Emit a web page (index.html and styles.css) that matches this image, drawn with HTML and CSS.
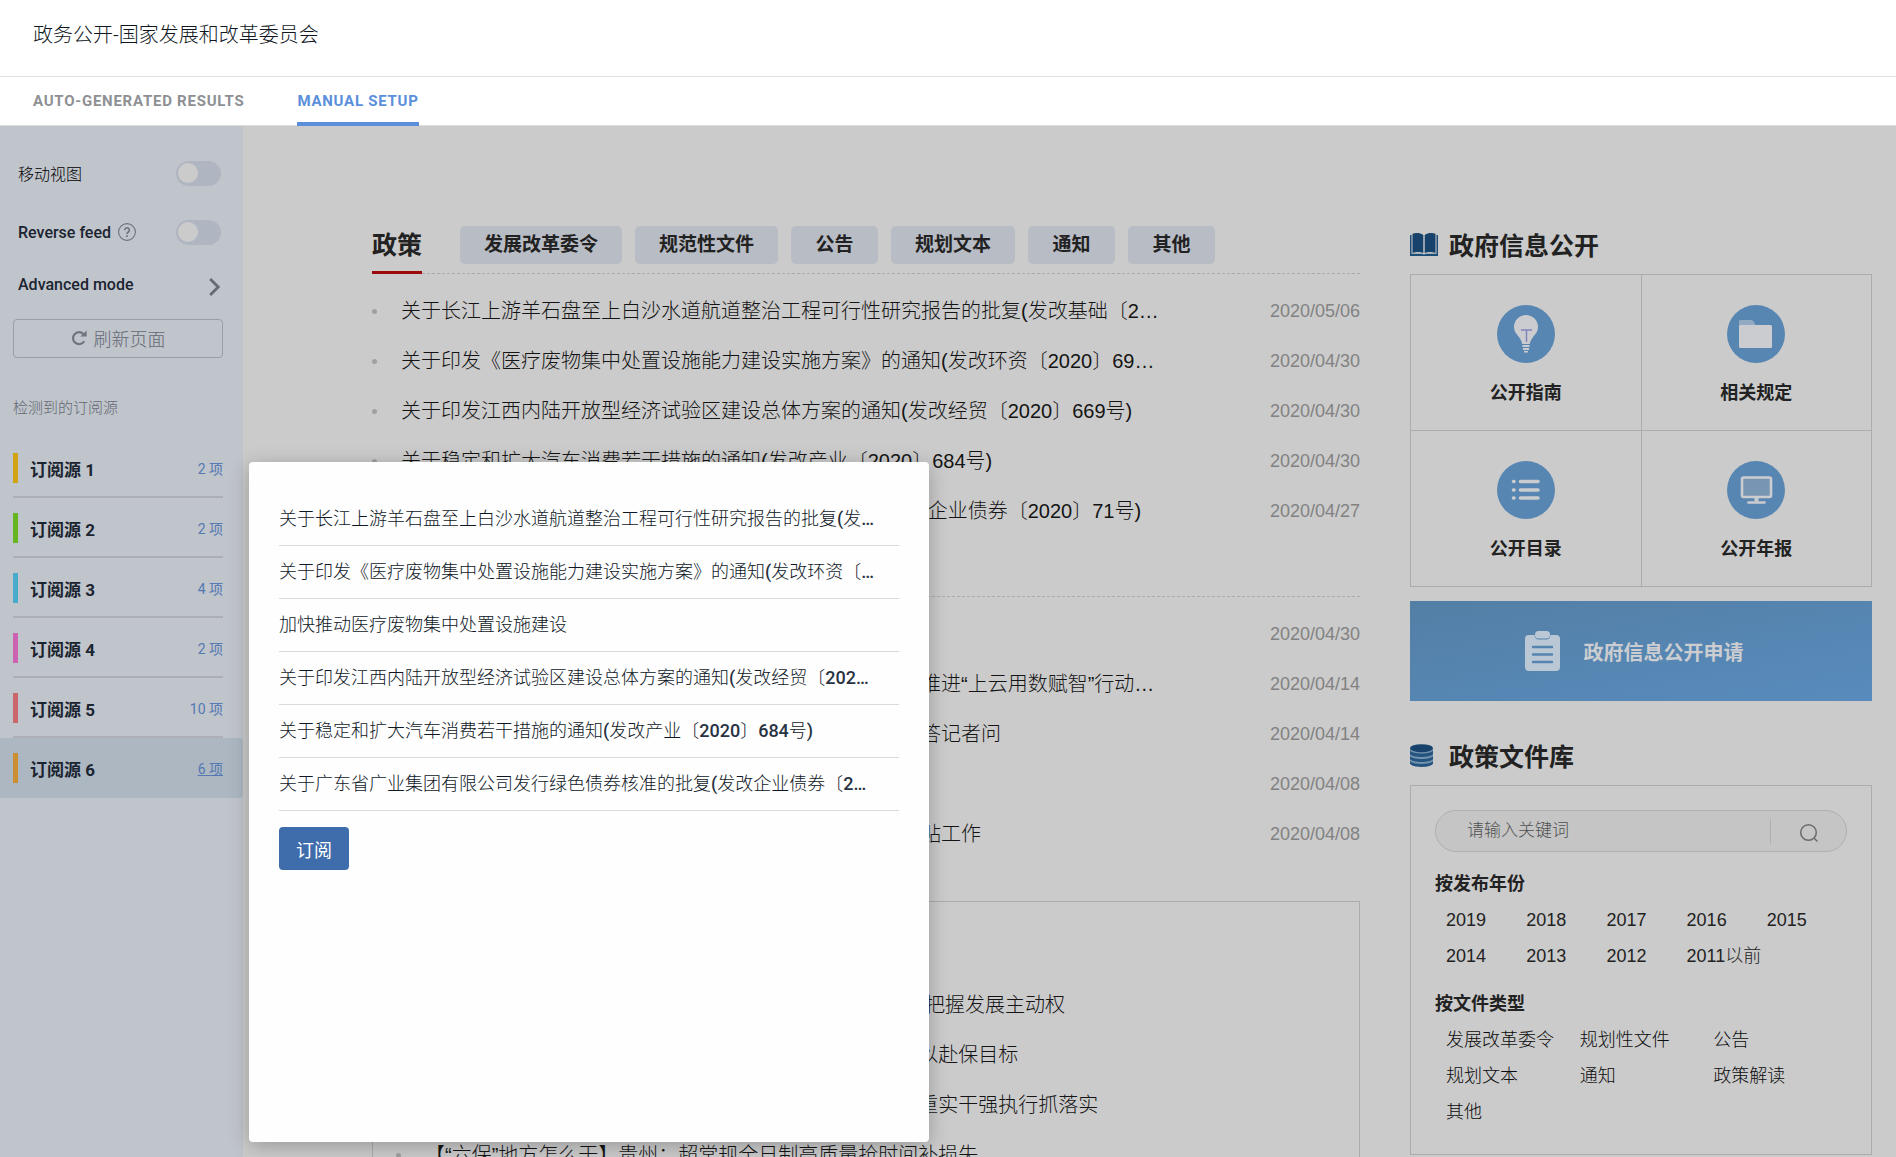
FILE: index.html
```html
<!DOCTYPE html>
<html lang="zh-CN">
<head>
<meta charset="utf-8">
<title>政务公开-国家发展和改革委员会</title>
<link rel="stylesheet" href="styles.css">
</head>
<body>
<header class="topbar">
  <h1 class="topbar-title">政务公开-国家发展和改革委员会</h1>
</header>
<nav class="modes">
  <a class="mode" href="#auto">AUTO-GENERATED RESULTS</a>
  <a class="mode mode-active" href="#manual">MANUAL SETUP</a>
</nav>
<div class="workspace">
  <aside class="sidebar">
    <div class="option">
      <label class="option-label" for="mobile-view">移动视图</label>
      <input class="toggle" type="checkbox" id="mobile-view">
    </div>
    <div class="option">
      <label class="option-label" for="reverse-feed">Reverse feed</label>
      <svg class="help" viewBox="0 0 18 18" width="18" height="18" fill="none" stroke="#6d737d"><circle cx="9" cy="9" r="8.4" stroke-width="1.1"/><path d="M6.7 7.2a2.3 2.3 0 1 1 3.6 1.8c-.9.6-1.3.9-1.3 1.9" stroke-width="1.6"/><path d="M9 12.2v1.7" stroke-width="1.7"/></svg>
      <input class="toggle" type="checkbox" id="reverse-feed">
    </div>
    <a class="option option-link" href="#advanced">
      <span class="option-label">Advanced mode</span>
      <svg class="chevron" viewBox="0 0 12 18" width="12" height="18" fill="none" stroke="#666b74" stroke-width="2.8"><path d="M1.2 1l8 8-8 8"/></svg>
    </a>
    <button class="refresh" type="button">
      <svg viewBox="0 0 16 16" width="16" height="16" fill="none" stroke="#6f757f" stroke-width="2.2"><path d="M13.2 11.2A6 6 0 1 1 12.4 4"/><path d="M15.6.6v6H9.4z" fill="#6f757f" stroke="none"/></svg>
      <span>刷新页面</span>
    </button>
    <h2 class="found">检测到的订阅源</h2>
    <ul class="feeds">
      <li class="feed feed-gold"><span class="feed-name">订阅源 1</span><a class="feed-count" href="#feed1">2 项</a></li>
      <li class="feed feed-green"><span class="feed-name">订阅源 2</span><a class="feed-count" href="#feed2">2 项</a></li>
      <li class="feed feed-blue"><span class="feed-name">订阅源 3</span><a class="feed-count" href="#feed3">4 项</a></li>
      <li class="feed feed-pink"><span class="feed-name">订阅源 4</span><a class="feed-count" href="#feed4">2 项</a></li>
      <li class="feed feed-red"><span class="feed-name">订阅源 5</span><a class="feed-count" href="#feed5">10 项</a></li>
      <li class="feed feed-orange feed-active"><span class="feed-name">订阅源 6</span><a class="feed-count" href="#feed6">6 项</a></li>
    </ul>
  </aside>

  <main class="preview">
    <div class="news">
      <div class="section-head">
        <h2 class="section-title">政策</h2>
        <div class="chips">
          <a class="chip" href="#p1">发展改革委令</a>
          <a class="chip" href="#p2">规范性文件</a>
          <a class="chip" href="#p3">公告</a>
          <a class="chip" href="#p4">规划文本</a>
          <a class="chip" href="#p5">通知</a>
          <a class="chip" href="#p6">其他</a>
        </div>
      </div>
      <ul class="articles">
        <li class="article"><a href="#a1">关于长江上游羊石盘至上白沙水道航道整治工程可行性研究报告的批复(发改基础〔2…</a><time>2020/05/06</time></li>
        <li class="article"><a href="#a2">关于印发《医疗废物集中处置设施能力建设实施方案》的通知(发改环资〔2020〕69…</a><time>2020/04/30</time></li>
        <li class="article"><a href="#a3">关于印发江西内陆开放型经济试验区建设总体方案的通知(发改经贸〔2020〕669号)</a><time>2020/04/30</time></li>
        <li class="article"><a href="#a4">关于稳定和扩大汽车消费若干措施的通知(发改产业〔2020〕684号)</a><time>2020/04/30</time></li>
        <li class="article"><a href="#a5">关于广东省广业集团有限公司发行绿色债券核准的批复(发改企业债券〔2020〕71号)</a><time>2020/04/27</time></li>
      </ul>
      <div class="section-head section-head-next">
        <h2 class="section-title">解读</h2>
      </div>
      <ul class="articles">
        <li class="article"><a href="#b1">加快推动医疗废物集中处置设施建设</a><time>2020/04/30</time></li>
        <li class="article"><a href="#b2">国家发展改革委高技术司有关负责同志就《实施方案》加快推进“上云用数赋智”行动…</a><time>2020/04/14</time></li>
        <li class="article"><a href="#b3">国家发展改革委有关负责同志就《营造更好发展环境方案》答记者问</a><time>2020/04/14</time></li>
        <li class="article"><a href="#b4">稳妥推进价格临时补贴</a><time>2020/04/08</time></li>
        <li class="article"><a href="#b5">国家发展改革委有关负责人就进一步做好阶段性价格临时补贴工作</a><time>2020/04/08</time></li>
      </ul>
      <section class="topic">
        <h2 class="topic-title">专题</h2>
        <ul class="articles">
          <li class="article"><a href="#c1">【“六保”地方怎么干】江西：以5G产业为引领升级提速，把握发展主动权</a></li>
          <li class="article"><a href="#c2">【“六保”地方怎么干】浙江：稳外贸稳外资稳投资，全力以赴保目标</a></li>
          <li class="article"><a href="#c3">【“六保”地方怎么干】山东：聚焦重点任务压实各责任，重实干强执行抓落实</a></li>
          <li class="article"><a href="#c4">【“六保”地方怎么干】贵州：超常规全日制高质量抢时间补损失</a></li>
        </ul>
      </section>
    </div>

    <div class="side">
      <h2 class="side-title">
        <svg viewBox="0 0 28 23" width="28" height="23"><path d="M0 2h1.500v18.800h10.500l2 .8 2-.8h10.500V2h1.500v21H0z" fill="#1d4e79"/><path d="M2.500 .8C6-.3 10-.2 13.300 2v18c-3.300-1.500-7.300-1.300-10.800 0zM14.700 2c3.300-2.200 7.300-2.300 10.800-1.200V20c-3.500-1.300-7.500-1.500-10.800 0z" fill="#16426b"/></svg>
        <span>政府信息公开</span>
      </h2>
      <div class="tiles">
        <a class="tile" href="#t1">
          <svg viewBox="0 0 58 58" width="58" height="58"><circle cx="29" cy="29" r="29" fill="#5786b2"/><path d="M29 10a12 12 0 0 0-12 12c0 4 2 6.500 4.500 9.500 2.200 2.700 3.200 4.500 3.700 7.500h7.600c.5-3 1.500-4.800 3.700-7.500C39 28.500 41 26 41 22a12 12 0 0 0-12-12zM25.500 40h7v2h-7zM26 43h6v2h-6zM27 46h4v1.500h-4z" fill="#cbcccf"/><path d="M24 25h11M29.500 25v12" stroke="#8583bd" stroke-width="1.500" fill="none"/></svg>
          <span>公开指南</span>
        </a>
        <a class="tile" href="#t2">
          <svg viewBox="0 0 58 58" width="58" height="58"><circle cx="29" cy="29" r="29" fill="#5786b2"/><path d="M12 24v-7.500q0-1.500 1.500-1.500H24q2 0 3 2l1.500 3H30v4z" fill="#93aac2"/><rect x="12" y="20" width="33" height="23" rx="1.500" fill="#cbcccf"/></svg>
          <span>相关规定</span>
        </a>
        <a class="tile" href="#t3">
          <svg viewBox="0 0 58 58" width="58" height="58"><circle cx="29" cy="29" r="29" fill="#5786b2"/><path d="M23.500 20.500h17.500M23.500 29h17.500M23.500 37h17.500M16.500 20.500h.5M16.500 29h.5M16.500 37h.5" stroke="#cbcccf" stroke-width="3.600" stroke-linecap="round"/></svg>
          <span>公开目录</span>
        </a>
        <a class="tile" href="#t4">
          <svg viewBox="0 0 58 58" width="58" height="58"><circle cx="29" cy="29" r="29" fill="#5786b2"/><rect x="15" y="16.500" width="29" height="19.500" rx="1.500" fill="#7895b3" stroke="#cbcccf" stroke-width="2.600"/><path d="M27.500 37h4v3.500h-4z" fill="#cbcccf"/><path d="M21.500 41.500h16" stroke="#cbcccf" stroke-width="2.600" stroke-linecap="round"/></svg>
          <span>公开年报</span>
        </a>
      </div>
      <a class="apply" href="#apply">
        <svg viewBox="0 0 35 40" width="35" height="40"><path d="M4 4h5.500c.5 3.500 2 4.500 4.500 4.500h7c2.500 0 4-1 4.500-4.500H31a4 4 0 0 1 4 4v28a4 4 0 0 1-4 4H4a4 4 0 0 1-4-4V8a4 4 0 0 1 4-4z" fill="#bac8d6"/><rect x="10" y="0" width="15" height="7.500" rx="3.500" fill="#bac8d6"/><path d="M8 16h19M8 23.500h19M8 31h19" stroke="#5684b0" stroke-width="2.400" stroke-linecap="round"/></svg>
        <span>政府信息公开申请</span>
      </a>
      <h2 class="side-title side-title-next">
        <svg viewBox="0 0 28 23" width="28" height="23"><path d="M0 4v15c0 5 23 5 23 0V4z" fill="#7393ae"/><ellipse cx="11.500" cy="4.200" rx="11.500" ry="4" fill="#16426b"/><path d="M0 6.500c2 4 21 4 23 0v3.500c-2 4-21 4-23 0zM0 12c2 4 21 4 23 0v3c-2 4-21 4-23 0zM0 17c2 4 21 4 23 0v2.500c-2 4.500-21 4.500-23 0z" fill="#24547f"/></svg>
        <span>政策文件库</span>
      </h2>
      <section class="library">
        <form class="search">
          <input class="search-input" type="text" placeholder="请输入关键词" aria-label="请输入关键词">
          <button class="search-button" type="submit" aria-label="搜索"><svg viewBox="0 0 20 20" width="20" height="20" fill="none" stroke="#6b6b6b" stroke-width="1.500"><circle cx="9.500" cy="9.500" r="7.800"/><path d="M15 15l3.500 3.500"/></svg></button>
        </form>
        <h3 class="filter-title">按发布年份</h3>
        <div class="filters filters-year">
          <a href="#y">2019</a><a href="#y">2018</a><a href="#y">2017</a><a href="#y">2016</a><a href="#y">2015</a>
          <a href="#y">2014</a><a href="#y">2013</a><a href="#y">2012</a><a href="#y">2011以前</a>
        </div>
        <h3 class="filter-title">按文件类型</h3>
        <div class="filters filters-type">
          <a href="#k">发展改革委令</a><a href="#k">规划性文件</a><a href="#k">公告</a>
          <a href="#k">规划文本</a><a href="#k">通知</a><a href="#k">政策解读</a>
          <a href="#k">其他</a>
        </div>
      </section>
    </div>
  </main>

  <section class="popup" role="dialog" aria-label="订阅源 6">
    <ul class="items">
      <li class="item">关于长江上游羊石盘至上白沙水道航道整治工程可行性研究报告的批复<b>(</b>发<b>…</b></li>
      <li class="item">关于印发《医疗废物集中处置设施能力建设实施方案》的通知<b>(</b>发改环资〔<b>…</b></li>
      <li class="item">加快推动医疗废物集中处置设施建设</li>
      <li class="item">关于印发江西内陆开放型经济试验区建设总体方案的通知<b>(</b>发改经贸〔<b>202…</b></li>
      <li class="item">关于稳定和扩大汽车消费若干措施的通知<b>(</b>发改产业〔<b>2020</b>〕<b>684</b>号<b>)</b></li>
      <li class="item">关于广东省广业集团有限公司发行绿色债券核准的批复<b>(</b>发改企业债券〔<b>2…</b></li>
    </ul>
    <button class="subscribe" type="button">订阅</button>
  </section>
</div>
</body>
</html>
```

FILE: styles.css
```css
*, *::before, *::after { box-sizing: border-box; }

body {
  margin: 0;
  height: 100vh;
  display: flex;
  flex-direction: column;
  overflow: hidden;
  font-family: Roboto, "Noto Sans CJK SC", sans-serif;
  font-weight: 300;
  color: #1f2937;
  background: #fff;
}

h1, h2, h3, ul { margin: 0; padding: 0; font-weight: inherit; }
ul { list-style: none; }
a { color: inherit; text-decoration: none; }
svg { display: block; flex: none; }
button, input { font-family: inherit; }

/* Top bar and mode tabs */
.topbar {
  flex: none;
  height: 77px;
  padding: 17px 33px;
  border-bottom: 1px solid #dfe1e3;
}
.topbar-title { font-size: 20px; line-height: 36px; color: #0e1622; }
.modes {
  flex: none;
  display: flex;
  gap: 53px;
  height: 49px;
  padding: 0 33px;
  border-bottom: 1px solid #dcdcdc;
}
.mode {
  height: 49px;
  font-size: 15px;
  font-weight: 700;
  line-height: 48px;
  letter-spacing: 0.05em;
  color: #8e9093;
}
.mode-active { color: #5b8fdc; border-bottom: 4px solid #5b8fdc; }

.workspace {
  position: relative;
  flex: 1;
  display: flex;
  min-height: 0;
}

/* Sidebar */
.sidebar { flex: none; width: 243px; padding-top: 26px; background: #c0c4cb; }
.option {
  display: flex;
  align-items: center;
  height: 42px;
  margin-bottom: 17px;
  padding: 0 22px 0 18px;
  font-size: 16px;
  color: #1b2431;
}
.option-label { font-weight: 500; }
.option:first-child .option-label { font-weight: 300; color: #000; }
.option-link { align-items: flex-start; height: 34px; margin-bottom: 15px; padding-top: 5px; }
.help { margin-left: 7px; }
.chevron { margin: 3px 0 0 auto; }
.toggle {
  appearance: none;
  display: flex;
  align-items: center;
  width: 45px;
  height: 25px;
  margin: 0 0 0 auto;
  padding: 2px;
  border-radius: 13px;
  background: #afb6c1;
}
.toggle::before {
  content: "";
  width: 20px;
  height: 20px;
  border-radius: 50%;
  background: #cbcbcb;
}
.refresh {
  display: flex;
  align-items: center;
  justify-content: center;
  gap: 7px;
  width: 210px;
  height: 39px;
  margin: 0 0 0 13px;
  padding: 0 0 2px;
  border: 1px solid #9a9ea6;
  border-radius: 4px;
  background: none;
  font-size: 18px;
  font-weight: 300;
  color: #636974;
}
.found {
  margin: 38px 13px 18px;
  font-size: 15px;
  line-height: 24px;
  color: #636974;
}
.feeds { padding-bottom: 20px; }
.feed {
  display: flex;
  align-items: center;
  height: 60px;
  padding: 0 20px 0 13px;
}
.feed:not(.feed-active) {
  background: linear-gradient(#acafb5, #acafb5) 13px 100% / 210px 2px no-repeat;
}
.feed::before { content: ""; width: 5px; height: 30px; margin-right: 12px; background: currentColor; }
.feed-active { border-radius: 0 3px 3px 0; background: #acb7c2; }
.feed-gold { color: #cfa312; }
.feed-green { color: #66b71f; }
.feed-blue { color: #48abcb; }
.feed-pink { color: #cb63b0; }
.feed-red { color: #cb676c; }
.feed-orange { color: #cb8f30; }
.feed-name { font-size: 17px; font-weight: 700; color: #1b2431; }
.feed-count { margin-left: auto; font-size: 14px; font-weight: 400; color: #5479b3; }
.feed-active .feed-count { text-decoration: underline; }

/* Previewed page */
.preview {
  flex: 1;
  min-width: 0;
  display: grid;
  grid-template-columns: minmax(0, 1fr) 462px;
  align-items: start;
  gap: 50px;
  padding: 100px 24px 0 129px;
  overflow: hidden;
  background: #cbcbcb;
  color: #222;
  font-family: "Liberation Sans", "Noto Sans CJK SC", sans-serif;
}
.section-head {
  display: flex;
  gap: 38px;
  height: 48px;
  margin-bottom: 12px;
  border-bottom: 1px dashed #acacac;
}
.section-head-next { margin-top: 13px; }
.section-title {
  height: 48px;
  border-bottom: 3px solid #9c0a0e;
  font-size: 25px;
  font-weight: 700;
  line-height: 38px;
}
.chips { display: flex; gap: 13px; }
.chip {
  min-width: 87px;
  height: 38px;
  padding: 0 24px;
  border-radius: 5px;
  background: #b8bcc4;
  font-size: 19px;
  font-weight: 700;
  line-height: 38px;
  text-align: center;
}
.article {
  display: flex;
  align-items: center;
  height: 50px;
  font-size: 20px;
  line-height: 28px;
  white-space: nowrap;
}
.article a { color: #141414; }
.article::before {
  content: "";
  width: 5px;
  height: 5px;
  margin-right: 24px;
  border-radius: 50%;
  background: #a0a0a0;
}
.article time { margin-left: auto; font-size: 18px; color: #828282; }
.topic { margin-top: 42px; padding: 20px 23px; border: 1px solid #acacac; }
.topic-title { margin-bottom: 22px; font-size: 25px; font-weight: 700; line-height: 36px; }

.side-title {
  display: flex;
  align-items: center;
  gap: 11px;
  height: 36px;
  margin-bottom: 12px;
  font-size: 25px;
  font-weight: 700;
}
.side-title-next { margin-top: 36px; }
.tiles {
  display: grid;
  grid-template-columns: 1fr 1fr;
  gap: 1px;
  border: 1px solid #acacac;
  background: #acacac;
}
.tile {
  display: flex;
  flex-direction: column;
  align-items: center;
  gap: 17px;
  height: 155px;
  padding-top: 30px;
  background: #cbcbcb;
  font-size: 18px;
  font-weight: 700;
  line-height: 26px;
}
.apply {
  display: flex;
  align-items: center;
  justify-content: center;
  gap: 24px;
  height: 100px;
  margin-top: 14px;
  padding-right: 14px;
  background: linear-gradient(170deg, #537fa5, #588bbd);
  font-size: 20px;
  font-weight: 700;
  color: #cbcdd0;
}
.library { padding: 24px; border: 1px solid #acacac; }
.search {
  display: flex;
  align-items: center;
  height: 42px;
  margin-bottom: 14px;
  border: 1px solid #b0b0b0;
  border-radius: 21px;
  background: #c5c5c5;
}
.search-input {
  flex: 1;
  min-width: 0;
  padding: 0 0 0 31px;
  border: 0;
  background: none;
  font-size: 17px;
  font-weight: 300;
  color: #292929;
}
.search-input::placeholder { color: #505050; opacity: 1; }
.search-button {
  display: flex;
  align-items: center;
  justify-content: center;
  width: 76px;
  height: 25px;
  padding: 3px 0 0;
  border: 0;
  border-left: 1px solid #b0b0b0;
  background: none;
}
.filter-title { font-size: 18px; font-weight: 700; line-height: 36px; }
.filters { display: grid; margin-left: 11px; font-size: 18px; line-height: 36px; white-space: nowrap; }
.filters-year { grid-template-columns: repeat(5, minmax(0, 1fr)); margin-bottom: 12px; }
.filters-type { grid-template-columns: repeat(3, minmax(0, 1fr)); color: #0c0c0c; }

/* Feed item popup, lies over the preview */
.popup {
  position: absolute;
  left: 249px;
  top: 336px;
  width: 680px;
  min-height: 680px;
  padding: 31px 30px 30px;
  border-radius: 4px;
  background: #fefefe;
  box-shadow: 0 4px 20px rgba(0, 0, 0, 0.25);
}
.item {
  height: 53px;
  border-bottom: 1px solid #d9dadb;
  font-size: 18px;
  line-height: 52px;
  white-space: nowrap;
  color: #0e1726;
}
.item b { font-weight: 500; color: #283242; }
.subscribe {
  height: 43px;
  margin-top: 16px;
  padding: 0 17px;
  border: 0;
  border-radius: 4px;
  background: #3f6cab;
  font-size: 18px;
  font-weight: 400;
  color: #fff;
}
```
